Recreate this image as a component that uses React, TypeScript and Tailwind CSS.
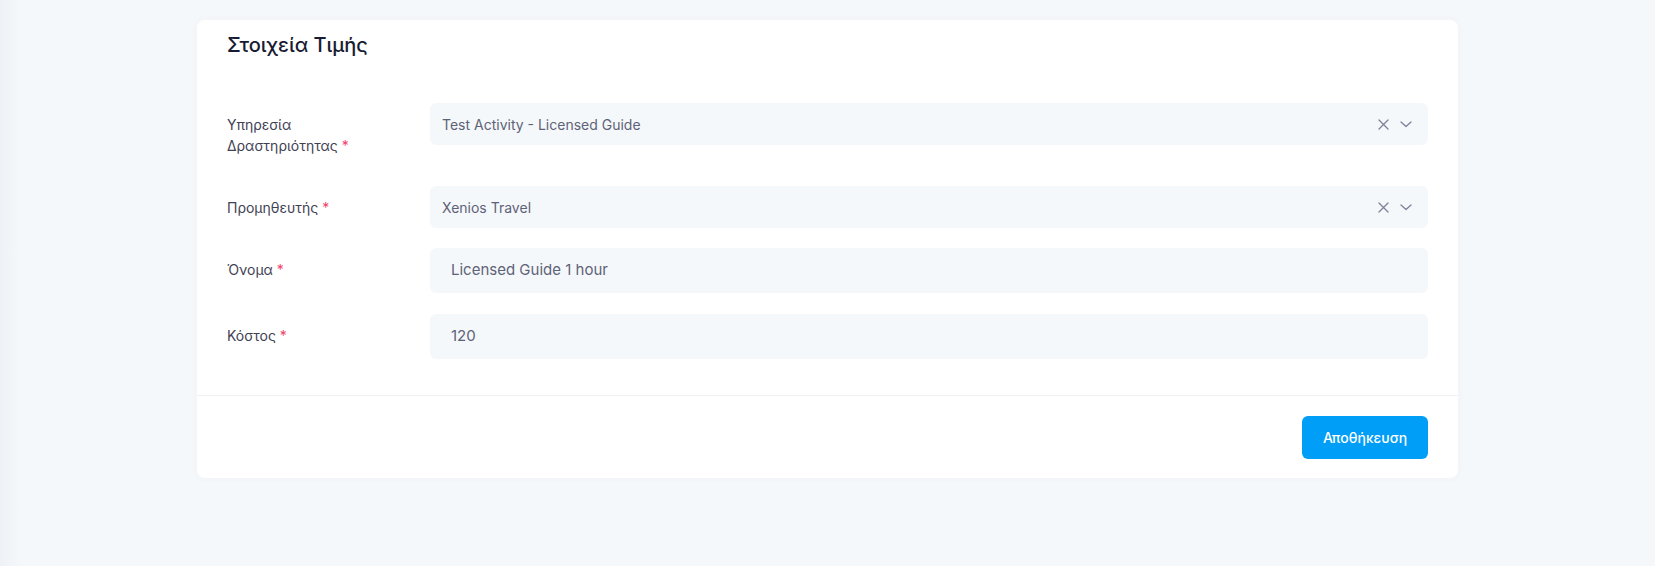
import React from "react";

const font = { fontFamily: "Inter, 'Noto Sans', sans-serif" };

function XIcon() {
  return (
    <svg width="11" height="11" viewBox="0 0 11 11" fill="none" stroke="#7e8299" strokeWidth="1.3" strokeLinecap="round">
      <path d="M1 1L10 10M10 1L1 10" />
    </svg>
  );
}

function Chevron() {
  return (
    <svg width="12" height="7" viewBox="0 0 12 7" fill="none" stroke="#7e8299" strokeWidth="1.3" strokeLinecap="round" strokeLinejoin="round">
      <path d="M1 1L6 5.5L11 1" />
    </svg>
  );
}

function Label({ children }: { children: React.ReactNode }) {
  return (
    <div className="w-[203px] shrink-0 pr-4 pt-[11px] text-[14px] leading-[21px] text-[#3f4254]">
      {children}
      <span className="text-[#f1416c]"> *</span>
    </div>
  );
}

function SelectBox({ value }: { value: string }) {
  return (
    <div className="flex h-[42px] flex-1 items-center rounded-[6px] bg-[#f5f8fa] pl-[12px] pr-[16px]">
      <span className="flex-1 text-[14px] text-[#5e6278]">{value}</span>
      <span className="flex items-center gap-[11px]">
        <XIcon />
        <Chevron />
      </span>
    </div>
  );
}

function InputBox({ value }: { value: string }) {
  return (
    <div className="flex h-[45px] flex-1 items-center rounded-[6px] bg-[#f5f8fa] pl-[21px] text-[15px] text-[#5e6278]">
      {value}
    </div>
  );
}

export default function App() {
  return (
    <div className="flex min-h-[566px] bg-[#f5f8fa]" style={font}>
      <div className="w-[20px] shrink-0 bg-gradient-to-r from-[#eef2f6] to-[#f5f8fa]" />
      <div className="flex-1 pr-[20px]">
        <div className="mx-auto mt-[20px] w-[1261px] rounded-[8px] bg-white shadow-[0_0_10px_rgba(82,63,105,0.03)]">
          <div className="px-[30px] pt-[10px]">
            <h3 className="text-[20px] font-medium leading-[30px] text-[#181c32]">Στοιχεία Τιμής</h3>
          </div>
          <div className="px-[30px] pt-[43px] pb-[36px]">
            <div className="flex items-start">
              <Label>
                Υπηρεσία
                <br />
                Δραστηριότητας
              </Label>
              <SelectBox value="Test Activity - Licensed Guide" />
            </div>
            <div className="mt-[30px] flex items-start">
              <Label>Προμηθευτής</Label>
              <SelectBox value="Xenios Travel" />
            </div>
            <div className="mt-[20px] flex items-start">
              <Label>Όνομα</Label>
              <InputBox value="Licensed Guide 1 hour" />
            </div>
            <div className="mt-[21px] flex items-start">
              <Label>Κόστος</Label>
              <InputBox value="120" />
            </div>
          </div>
          <div className="flex justify-end border-t border-[#eff2f5] px-[30px] pt-[20px] pb-[19px]">
            <button className="h-[43px] w-[126px] rounded-[6px] bg-[#009ef7] text-[14px] font-medium text-white">
              Αποθήκευση
            </button>
          </div>
        </div>
      </div>
    </div>
  );
}
